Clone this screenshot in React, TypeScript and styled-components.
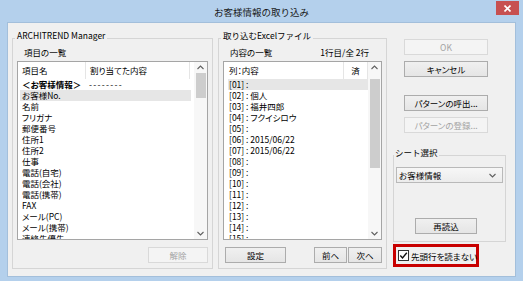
import React from 'react';
import styled, { createGlobalStyle } from 'styled-components';

const GlobalStyle = createGlobalStyle`
  html, body {
    margin: 0;
    padding: 0;
    background: #b4d0ec;
  }
  body {
    font-family: "Noto Sans CJK JP", "Noto Sans", sans-serif;
    font-size: 8.5px;
    color: #000;
    font-feature-settings: "palt";
  }
  * {
    box-sizing: border-box;
  }
`;

const leftItems = [
  '名前',
  'フリガナ',
  '郵便番号',
  '住所1',
  '住所2',
  '仕事',
  '電話(自宅)',
  '電話(会社)',
  '電話(携帯)',
  'FAX',
  'メール(PC)',
  'メール(携帯)',
  '連絡先優先',
];

const excelRows = [
  '',
  '個人',
  '福井四郎',
  'フクイシロウ',
  '',
  '2015/06/22',
  '2015/06/22',
  '',
  '',
  '',
  '',
  '',
  '',
  '',
  '',
];

function Chevron({ up }: { up?: boolean }) {
  return (
    <svg width="7" height="5" viewBox="0 0 7 5">
      <polyline
        points={up ? '0.5,4 3.5,1 6.5,4' : '0.5,1 3.5,4 6.5,1'}
        fill="none"
        stroke="#606060"
        strokeWidth="1.1"
      />
    </svg>
  );
}

function ScrollBar({ offset, size }: { offset: number; size: number }) {
  return (
    <Scroll>
      <ScrollArrow>
        <Chevron up />
      </ScrollArrow>
      <Track>
        <Thumb $offset={offset} $size={size} />
      </Track>
      <ScrollArrow>
        <Chevron />
      </ScrollArrow>
    </Scroll>
  );
}

export default function App() {
  return (
    <>
      <GlobalStyle />
      <Window>
        <TitleBar>
          <span />
          <Title>お客様情報の取り込み</Title>
          <CloseButton>
            <svg width="7" height="7" viewBox="0 0 7 7">
              <path d="M0.5 0.5 L6.5 6.5 M6.5 0.5 L0.5 6.5" stroke="#fff" strokeWidth="1.6" />
            </svg>
          </CloseButton>
        </TitleBar>
        <Client>
          <Group $width={201} $height={231}>
            <GroupLabel>ARCHITREND Manager</GroupLabel>
            <CaptionRow>
              <span>項目の一覧</span>
            </CaptionRow>
            <ListBox $width={191}>
              <ListBody>
                <HeaderRow>
                  <HeaderCell $width={68}>項目名</HeaderCell>
                  <HeaderCell $width={104}>割り当てた内容</HeaderCell>
                </HeaderRow>
                <ItemRow $margin="0 3px 0 2px">
                  <Cell $width={67} $bold>＜お客様情報＞</Cell>
                  <Dashes>--------</Dashes>
                </ItemRow>
                <ItemRow $margin="0 3px 0 2px" $selected>
                  <Cell $width={67}>お客様No.</Cell>
                </ItemRow>
                {leftItems.map((name) => (
                  <ItemRow key={name} $margin="0 3px 0 2px">
                    <Cell $width={67}>{name}</Cell>
                  </ItemRow>
                ))}
              </ListBody>
              <ScrollBar offset={0} size={25} />
            </ListBox>
            <ButtonRow>
              <Button $width={60} disabled>
                解除
              </Button>
            </ButtonRow>
          </Group>

          <Group $width={169} $height={231} $gap={5}>
            <GroupLabel>取り込むExcelファイル</GroupLabel>
            <CaptionRow $right={13}>
              <span>内容の一覧</span>
              <span>1行目/全 2行</span>
            </CaptionRow>
            <ListBox $width={159}>
              <ListBody>
                <HeaderRow>
                  <HeaderCell $width={120} $pad={5}>列：内容</HeaderCell>
                  <HeaderCell $width={24} $center>済</HeaderCell>
                </HeaderRow>
                {excelRows.map((value, i) => {
                  const no = String(i + 1).padStart(2, '0');
                  return (
                    <ItemRow key={no} $margin="0 0 0 4px" $selected={i === 0}>
                      <Cell $width={140} $pad={1}>
                        [{no}] : {value}
                      </Cell>
                    </ItemRow>
                  );
                })}
              </ListBody>
              <ScrollBar offset={6} size={89} />
            </ListBox>
            <ButtonRow>
              <Button $width={61} $push>
                設定
              </Button>
              <Button $width={33}>前へ</Button>
              <Button $width={34} $gap={1}>
                次へ
              </Button>
            </ButtonRow>
          </Group>

          <SideColumn>
            <SideButton disabled>OK</SideButton>
            <SideButton $top={6}>キャンセル</SideButton>
            <SideButton $top={18}>パターンの呼出...</SideButton>
            <SideButton $top={6} disabled>
              パターンの登録...
            </SideButton>
            <SheetGroup>
              <SheetLabel>シート選択</SheetLabel>
              <Combo>
                <span>お客様情報</span>
                <Chevron />
              </Combo>
              <Button $width={62} $reload>
                再読込
              </Button>
            </SheetGroup>
            <HighlightBox>
              <CheckBox>
                <svg width="9" height="9" viewBox="0 0 9 9">
                  <path d="M1.3 4.6 L3.5 6.9 L7.8 1.8" fill="none" stroke="#111" strokeWidth="1.4" />
                </svg>
              </CheckBox>
              <span>先頭行を読まない</span>
            </HighlightBox>
          </SideColumn>
        </Client>
      </Window>
    </>
  );
}

const Window = styled.div`
  width: 523px;
  height: 281px;
  background: #b4d0ec;
  display: flex;
  flex-direction: column;
  padding: 0 7px 4px 7px;
`;

const TitleBar = styled.div`
  height: 22px;
  flex: none;
  display: grid;
  grid-template-columns: 1fr auto 1fr;
  align-items: start;
`;

const Title = styled.div`
  font-size: 9.5px;
  line-height: 12px;
  padding-top: 6px;
  color: #1a1a1a;
  font-feature-settings: normal;
`;

const CloseButton = styled.div`
  justify-self: end;
  margin: 1px -3px 0 0;
  width: 23px;
  height: 14px;
  background: #c75050;
  display: flex;
  align-items: center;
  justify-content: center;
`;

const Client = styled.div`
  flex: 1;
  background: #f0f0f0;
  border: 1px solid #a3bfdb;
  display: flex;
  align-items: flex-start;
  padding: 15px 0 0 4px;
`;

const Group = styled.div<{ $width: number; $height: number; $gap?: number }>`
  position: relative;
  width: ${(p) => p.$width}px;
  height: ${(p) => p.$height}px;
  margin-left: ${(p) => p.$gap ?? 0}px;
  border: 1px solid #d5d5d5;
  display: flex;
  flex-direction: column;
  padding: 7px 4px 5px;
`;

const GroupLabel = styled.span`
  position: absolute;
  top: -10px;
  left: 2px;
  padding: 0 2px;
  line-height: 12px;
  background: #f0f0f0;
  font-feature-settings: normal;
`;

const CaptionRow = styled.div<{ $right?: number }>`
  height: 12px;
  line-height: 12px;
  margin-bottom: 3px;
  padding: 0 ${(p) => p.$right ?? 0}px 0 7px;
  display: flex;
  justify-content: space-between;
`;

const ListBox = styled.div<{ $width: number }>`
  width: ${(p) => p.$width}px;
  height: 179px;
  flex: none;
  border: 1px solid #a5a5a5;
  background: #fff;
  display: flex;
  overflow: hidden;
`;

const ListBody = styled.div`
  flex: 1;
  min-width: 0;
  display: flex;
  flex-direction: column;
  overflow: hidden;
`;

const HeaderRow = styled.div`
  height: 17px;
  flex: none;
  display: flex;
  align-items: stretch;
`;

const HeaderCell = styled.div<{ $width: number; $pad?: number; $center?: boolean }>`
  width: ${(p) => p.$width}px;
  flex: none;
  padding-left: ${(p) => (p.$center ? 0 : p.$pad ?? 4)}px;
  text-align: ${(p) => (p.$center ? 'center' : 'left')};
  line-height: 17px;
  border-right: 1px solid #e5e5e5;
`;

const ItemRow = styled.div<{ $margin: string; $selected?: boolean }>`
  height: 11px;
  flex: none;
  margin: ${(p) => p.$margin};
  display: flex;
  background: ${(p) => (p.$selected ? '#e6e6e6' : 'transparent')};
`;

const Cell = styled.div<{ $width: number; $bold?: boolean; $pad?: number }>`
  width: ${(p) => p.$width}px;
  flex: none;
  padding-left: ${(p) => p.$pad ?? 2}px;
  line-height: 11px;
  white-space: nowrap;
  font-weight: ${(p) => (p.$bold ? 700 : 400)};
`;

const Dashes = styled.div`
  padding-left: 2px;
  line-height: 11px;
  letter-spacing: 1.3px;
  white-space: nowrap;
`;

const Scroll = styled.div`
  width: 13px;
  flex: none;
  background: #f7f7f7;
  display: flex;
  flex-direction: column;
`;

const ScrollArrow = styled.div`
  height: 11px;
  flex: none;
  display: flex;
  align-items: center;
  justify-content: center;
`;

const Track = styled.div`
  flex: 1;
  padding: 0 1px 0 2px;
`;

const Thumb = styled.div<{ $offset: number; $size: number }>`
  margin-top: ${(p) => p.$offset}px;
  height: ${(p) => p.$size}px;
  background: #cdcdcd;
`;

const ButtonRow = styled.div`
  margin-top: 7px;
  height: 16px;
  display: flex;
  justify-content: flex-end;
`;

const Button = styled.button<{ $width: number; $push?: boolean; $gap?: number; $reload?: boolean }>`
  width: ${(p) => p.$width}px;
  height: 16px;
  flex: none;
  margin: ${(p) => (p.$reload ? '35px 0 0 21px' : `0 0 0 ${p.$gap ?? 0}px`)};
  margin-right: ${(p) => (p.$push ? 'auto' : '0')};
  margin-left: ${(p) => (p.$push ? '2px' : undefined)};
  padding: 0;
  font: inherit;
  line-height: 14px;
  color: #000;
  border: 1px solid #acacac;
  border-radius: 0;
  background: linear-gradient(#f0f0f0, #e5e5e5);

  &:disabled {
    color: #a3a3a3;
    border-color: #d9d9d9;
    background: #f4f4f4;
  }
`;

const SideColumn = styled.div`
  width: 113px;
  margin-left: 6px;
  padding-top: 1px;
  display: flex;
  flex-direction: column;
`;

const SideButton = styled(Button).attrs({ $width: 84 })<{ $top?: number }>`
  margin: ${(p) => p.$top ?? 0}px 0 0 11px;
`;

const SheetGroup = styled.div`
  position: relative;
  margin-top: 22px;
  height: 87px;
  border: 1px solid #d5d5d5;
  display: flex;
  flex-direction: column;
  align-items: flex-start;
  padding-top: 11px;
`;

const SheetLabel = styled(GroupLabel)`
  left: 0;
  padding: 0 1px;
`;

const Combo = styled.div`
  align-self: stretch;
  height: 16px;
  margin: 0 2px 0 2px;
  padding: 0 6px 0 2px;
  border: 1px solid #b9b9b9;
  background: linear-gradient(#f7f7f7, #ececec);
  display: flex;
  align-items: center;
  justify-content: space-between;
  line-height: 14px;
`;

const HighlightBox = styled.div`
  margin-top: 2px;
  width: 86px;
  height: 23px;
  border: 3px solid #c80000;
  display: flex;
  align-items: center;
  gap: 2px;
  padding-left: 2px;
  white-space: nowrap;
`;

const CheckBox = styled.div`
  width: 11px;
  height: 11px;
  flex: none;
  border: 1px solid #333;
  background: #fff;
  display: flex;
  align-items: center;
  justify-content: center;
`;
